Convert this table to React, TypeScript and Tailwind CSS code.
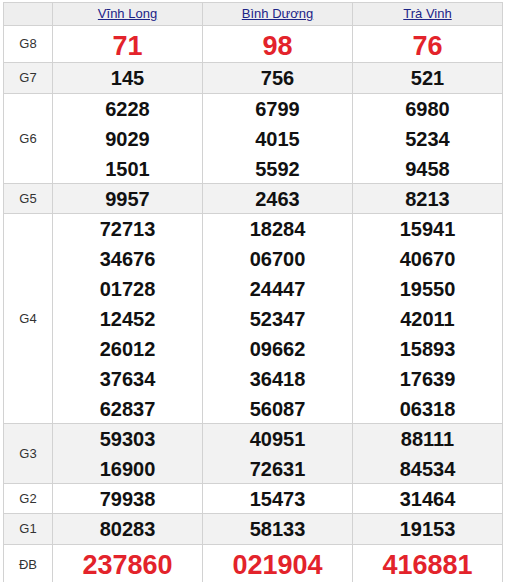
import React from "react";

type Row = {
  label: string;
  values: string[][];
  big?: boolean;
};

const PROVINCES = ["Vĩnh Long", "Bình Dương", "Trà Vinh"];

const ROWS: Row[] = [
  { label: "G8", values: [["71"], ["98"], ["76"]], big: true },
  { label: "G7", values: [["145"], ["756"], ["521"]] },
  {
    label: "G6",
    values: [
      ["6228", "9029", "1501"],
      ["6799", "4015", "5592"],
      ["6980", "5234", "9458"],
    ],
  },
  { label: "G5", values: [["9957"], ["2463"], ["8213"]] },
  {
    label: "G4",
    values: [
      ["72713", "34676", "01728", "12452", "26012", "37634", "62837"],
      ["18284", "06700", "24447", "52347", "09662", "36418", "56087"],
      ["15941", "40670", "19550", "42011", "15893", "17639", "06318"],
    ],
  },
  {
    label: "G3",
    values: [
      ["59303", "16900"],
      ["40951", "72631"],
      ["88111", "84534"],
    ],
  },
  { label: "G2", values: [["79938"], ["15473"], ["31464"]] },
  { label: "G1", values: [["80283"], ["58133"], ["19153"]] },
  { label: "ĐB", values: [["237860"], ["021904"], ["416881"]], big: true },
];

export default function App() {
  return (
    <div className="min-h-[582px] bg-white pl-[3px] pt-[2px] font-['Liberation_Sans',Arial,sans-serif]">
      <div className="grid w-[500px] grid-cols-[48px_149px_149px_149px] grid-rows-[22px_36px_30px_89px_29px_209px_59px_29px_30px_40px] gap-px bg-[#d2d2d2] p-px">
        {/* header */}
        <div className="bg-[#eeeeee]" />
        {PROVINCES.map((p) => (
          <div key={p} className="flex items-center justify-center bg-[#eeeeee]">
            <a href="#" className="text-[13px] text-[#1c2488] underline">
              {p}
            </a>
          </div>
        ))}

        {ROWS.map((row, i) => {
          const bg = i % 2 === 1 ? "bg-[#f2f2f2]" : "bg-white";
          return (
            <React.Fragment key={row.label}>
              <div className={`flex items-center justify-center text-[13px] text-[#333] ${bg}`}>
                {row.label}
              </div>
              {row.values.map((col, j) => (
                <div key={j} className={`flex flex-col ${bg} ${i === 0 ? "pb-[5px]" : ""} ${i === 2 ? "pb-[3px]" : ""}`}>
                  {col.map((n, k) => (
                    <div
                      key={k}
                      className={
                        row.big
                          ? "flex flex-1 items-center justify-center text-[27px] font-bold text-[#e3232b]"
                          : "flex flex-1 items-center justify-center text-[20px] font-bold text-[#111]"
                      }
                    >
                      {n}
                    </div>
                  ))}
                </div>
              ))}
            </React.Fragment>
          );
        })}
      </div>
    </div>
  );
}
